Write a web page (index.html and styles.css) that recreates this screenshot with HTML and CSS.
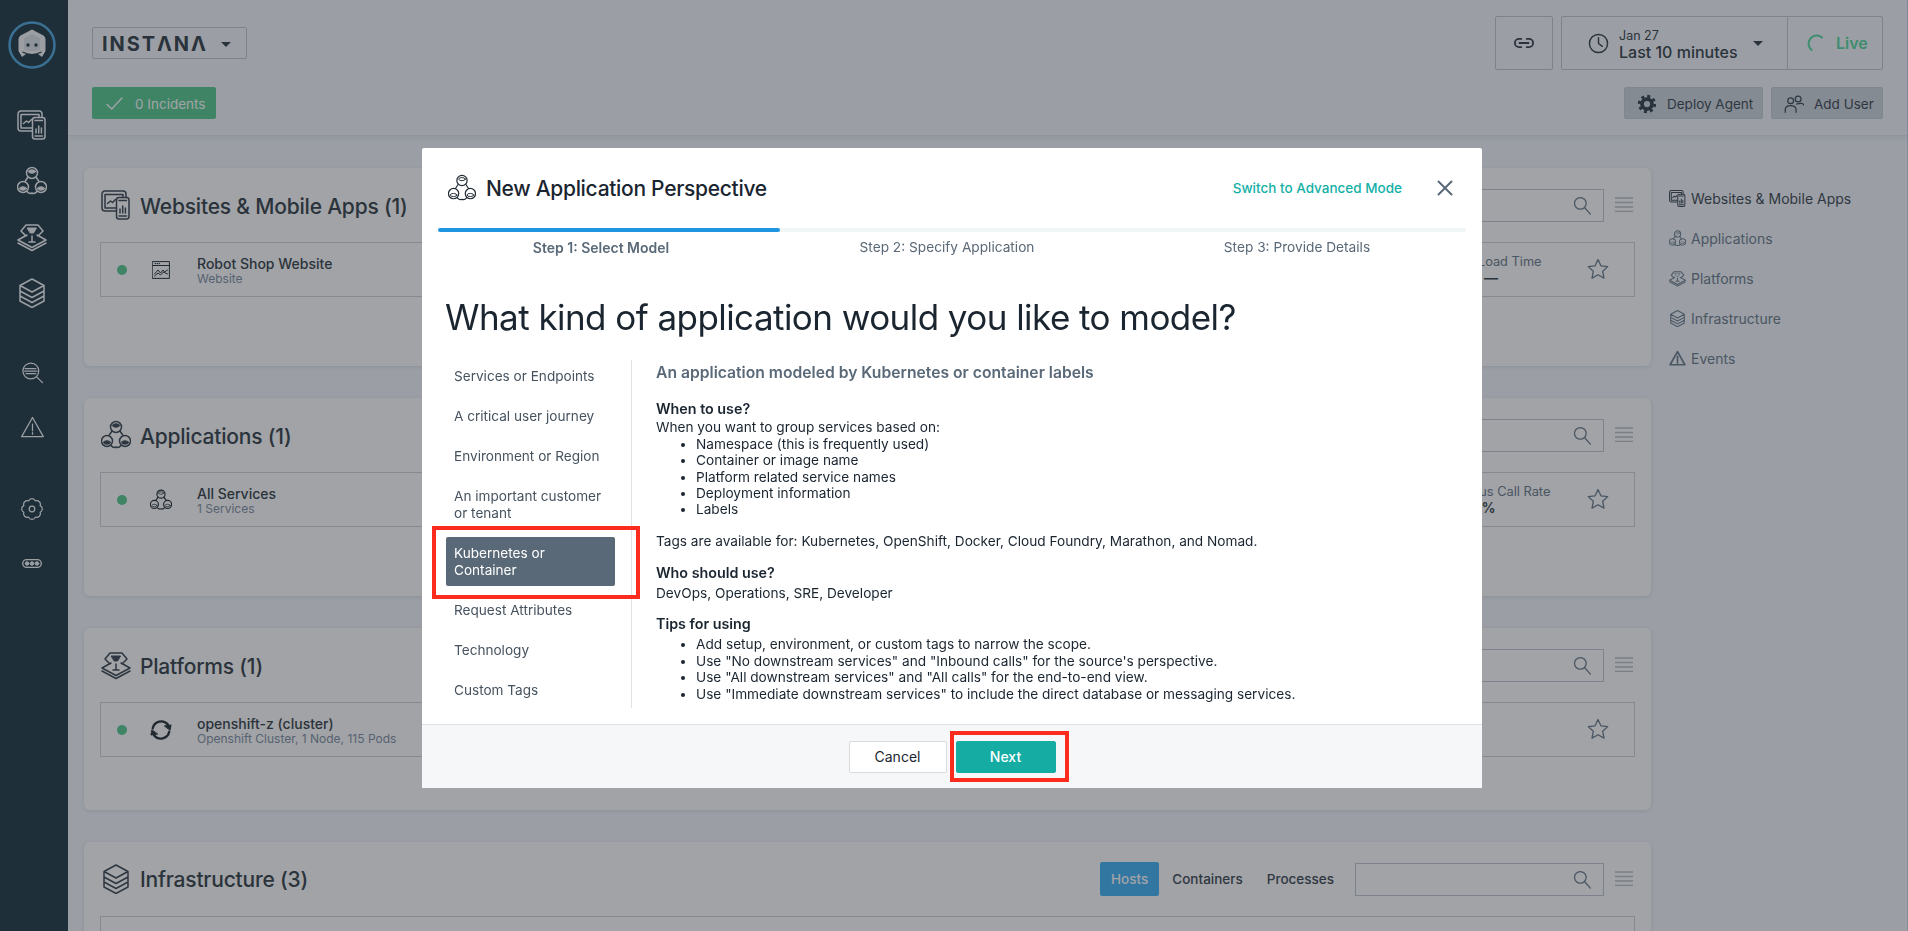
FILE: index.html
```html
<!doctype html>
<html>
<head>
    <meta charset="utf-8">
    <title>Instana - New Application Perspective</title>
    <link rel="stylesheet" href="styles.css">
</head>
<body>
<svg class="defs" xmlns="http://www.w3.org/2000/svg">
    <symbol id="i-web" viewBox="0 0 30 30">
        <path d="M15 21H4a3 3 0 0 1-3-3V4a3 3 0 0 1 3-3h18a3 3 0 0 1 3 3v3M15 18H4V4.500h18V7"/>
        <rect x="15.500" y="7.500" width="12.500" height="21.500" rx="2.500"/>
        <path d="M18 10.500h7.500M18 26h7.500M19 23v-4M21.700 23v-7M24.400 23v-5M6.500 13.500l3-2.500 2 1.500 3-3"/>
    </symbol>
    <symbol id="i-app" viewBox="0 0 30 30">
        <circle cx="15" cy="7" r="5.500"/><circle cx="6" cy="21" r="5.500"/><circle cx="24" cy="21" r="5.500"/>
        <path d="M11 11l-3 4.500M19 11l3 4.500M10 25.500q2.500 3 5 1.500 2.500 1.500 5-1.500"/>
        <ellipse class="solid" cx="15" cy="5.500" rx="3.500" ry="1.700"/><ellipse class="solid" cx="6" cy="22.500" rx="3.500" ry="1.700"/><ellipse class="solid" cx="24" cy="22.500" rx="3.500" ry="1.700"/>
    </symbol>
    <symbol id="i-plat" viewBox="0 0 30 28">
        <path d="M4 8l5-6h12l5 6-5 5M4 8l5 5M10 12l-9 5 14 7.500L29 17l-9-5M1 20l14 7.500L29 20M15 13v6M12 19h6"/>
        <path class="solid" d="M10.500 5h9l-3 5h-3z"/>
    </symbol>
    <symbol id="i-infra" viewBox="0 0 30 30">
        <path d="M15 1l12 6.500V23l-12 6.500L3 23V7.500zM3 7.500L15 14l12-6.500M3 13l12 6.500L27 13M3 18l12 6.500L27 18"/>
    </symbol>
    <symbol id="i-find" viewBox="0 0 30 30">
        <circle cx="13" cy="12" r="9.500"/>
        <path d="M6 9h13M5.500 12h15M7 15h12M20 19l7 7"/>
    </symbol>
    <symbol id="i-warn" viewBox="0 0 30 30">
        <path d="M15 3l13 23H2zM15 11v8M15 21v2"/>
    </symbol>
    <symbol id="i-gear" viewBox="0 0 30 30">
        <path d="M19.210 4.840A4.600 4.600 0 0 1 25.160 10.790 4.600 4.600 0 0 1 25.160 19.210 4.600 4.600 0 0 1 19.210 25.160 4.600 4.600 0 0 1 10.790 25.160 4.600 4.600 0 0 1 4.840 19.210 4.600 4.600 0 0 1 4.840 10.790 4.600 4.600 0 0 1 10.790 4.840 4.600 4.600 0 0 1 19.210 4.840z"/>
        <circle cx="15" cy="15" r="3.500"/>
    </symbol>
    <symbol id="i-star" viewBox="0 0 24 24">
        <path d="M12 2.500l2.900 6.300 6.800.8-5 4.700 1.300 6.800-6-3.400-6 3.400 1.300-6.800-5-4.700 6.800-.8z"/>
    </symbol>
    <symbol id="i-search" viewBox="0 0 24 24">
        <circle cx="10" cy="10" r="7"/><path d="M15 15l7 8"/>
    </symbol>
    <symbol id="i-menu" viewBox="0 0 18 15">
        <path d="M0 1h18M0 5.500h18M0 10h18M0 14.500h18"/>
    </symbol>
</svg>

<div class="app">
    <nav class="sidebar">
        <svg class="bot" viewBox="0 0 48 48">
            <circle class="bot-ring" cx="24" cy="24" r="22.500"/>
            <path class="bot-head" d="M24 8.500l10.500 5.500q3 1.500 3 4.500V30l-3.500 6-4-3H18l-4 3-3.500-6V18.500q0-3 3-4.500z"/>
            <path class="bot-face" d="M24 13l8 4.500V28l-3 2H19l-3-2V17.500z"/>
            <circle class="bot-eye" cx="20" cy="24" r="1.700"/><circle class="bot-eye" cx="28" cy="24" r="1.700"/>
            <path class="bot-chin" d="M14.500 31q9.500 5 19 0"/>
        </svg>
        <div class="side-group">
            <svg class="ic side-ic"><use href="#i-web"/></svg>
            <svg class="ic side-ic"><use href="#i-app"/></svg>
            <svg class="ic side-ic"><use href="#i-plat"/></svg>
            <svg class="ic side-ic"><use href="#i-infra"/></svg>
        </div>
        <div class="side-group side-mid">
            <svg class="ic side-ic"><use href="#i-find"/></svg>
            <svg class="ic side-ic"><use href="#i-warn"/></svg>
        </div>
        <div class="side-group side-low">
            <svg class="ic side-ic"><use href="#i-gear"/></svg>
            <svg class="ic side-more" viewBox="0 0 22 10"><rect x=".7" y=".7" width="20.600" height="8.600" rx="4.300"/><circle class="solid" cx="5.500" cy="5" r="2"/><circle class="solid" cx="11" cy="5" r="2"/><circle class="solid" cx="16.500" cy="5" r="2"/></svg>
        </div>
    </nav>

    <div class="main">
        <header class="topbar">
            <div class="topbar-row">
                <div class="brand"><span class="brand-name">INSTΛNΛ</span><span class="caret"></span></div>
                <div class="top-actions">
                    <button class="top-btn link-btn">
                        <svg class="ic link-ic" viewBox="0 0 22 12"><path d="M8 1.500H5.500a4.500 4.500 0 0 0 0 9H8M14 1.500h2.500a4.500 4.500 0 0 1 0 9H14M6 6h10"/></svg>
                    </button>
                    <div class="time-group">
                        <div class="top-btn time-btn">
                            <svg class="ic clock-ic" viewBox="0 0 22 22"><circle cx="11" cy="11" r="9.500"/><path d="M11 5v6l4 3"/></svg>
                            <div class="time-text"><span class="time-date">Jan 27</span><span class="time-range">Last 10 minutes</span></div>
                            <span class="caret"></span>
                        </div>
                        <div class="top-btn live-btn">
                            <svg class="ic live-ic" viewBox="0 0 18 18"><path d="M4.500 16A8 8 0 0 1 15 3.500"/></svg>
                            <span>Live</span>
                        </div>
                    </div>
                </div>
            </div>
            <div class="topbar-row row-low">
                <div class="incidents">
                    <svg class="ic check-ic" viewBox="0 0 18 14"><path d="M1 8l5 5L17 1"/></svg>
                    <span>0 Incidents</span>
                </div>
                <div class="quick-actions">
                    <div class="quick-btn btn-agent">
                        <svg class="gear-solid" viewBox="0 0 24 24"><circle cx="12" cy="12" r="6" /><circle class="gear-teeth" cx="12" cy="12" r="9"/></svg>
                        <span>Deploy Agent</span>
                    </div>
                    <div class="quick-btn btn-user">
                        <svg class="ic user-ic" viewBox="0 0 24 22"><circle cx="8" cy="7" r="3.500"/><circle cx="17" cy="5" r="3.500"/><path d="M1.500 21v-3q0-5 6.500-5t6.500 5v3M15 11q8-2 8.500 1"/></svg>
                        <span>Add User</span>
                    </div>
                </div>
            </div>
        </header>

        <div class="content">
            <div class="cards">
                <section class="card">
                    <div class="card-head">
                        <svg class="ic card-ic"><use href="#i-web"/></svg>
                        <h2>Websites &amp; Mobile Apps (1)</h2>
                        <div class="search"><svg class="ic search-ic"><use href="#i-search"/></svg></div>
                        <svg class="ic menu-ic"><use href="#i-menu"/></svg>
                    </div>
                    <div class="row">
                        <span class="dot"></span>
                        <span class="row-ic"><svg class="ic win-ic" viewBox="0 0 18 18"><rect x=".6" y=".6" width="16.800" height="16.800"/><path d="M.6 4.500h16.800M3 2.600h.6M5 2.600h.6M7 2.600h.6M2.500 13l3.500-4 2.500 3 2.500-3 1.500 2 3-2M2.500 15l3.500-3 2.500 2 3-3 4 2"/></svg></span>
                        <div class="row-text"><strong>Robot Shop Website</strong><small>Website</small></div>
                        <div class="metric"><span>Mean Load Time</span><b>—</b></div>
                        <svg class="ic star-ic"><use href="#i-star"/></svg>
                    </div>
                </section>

                <section class="card">
                    <div class="card-head">
                        <svg class="ic card-ic"><use href="#i-app"/></svg>
                        <h2>Applications (1)</h2>
                        <div class="search"><svg class="ic search-ic"><use href="#i-search"/></svg></div>
                        <svg class="ic menu-ic"><use href="#i-menu"/></svg>
                    </div>
                    <div class="row">
                        <span class="dot"></span>
                        <span class="row-ic"><svg class="ic app-ic"><use href="#i-app"/></svg></span>
                        <div class="row-text"><strong>All Services</strong><small>1 Services</small></div>
                        <div class="metric metric-rate"><span>Erroneous Call Rate</span><b>0%</b></div>
                        <svg class="ic star-ic"><use href="#i-star"/></svg>
                    </div>
                </section>

                <section class="card card-short">
                    <div class="card-head">
                        <svg class="ic card-ic"><use href="#i-plat"/></svg>
                        <h2>Platforms (1)</h2>
                        <div class="search"><svg class="ic search-ic"><use href="#i-search"/></svg></div>
                        <svg class="ic menu-ic"><use href="#i-menu"/></svg>
                    </div>
                    <div class="row">
                        <span class="dot"></span>
                        <span class="row-ic"><svg class="ic sync-ic" viewBox="0 0 26 24"><path d="M4 10A9.500 9.500 0 0 1 20.500 6M22 14A9.500 9.500 0 0 1 5.500 18"/><path class="solid" d="M17 7.500l7-1-1 5.500zM9 16.500l-7 1 1-5.500z"/></svg></span>
                        <div class="row-text"><strong>openshift-z (cluster)</strong><small>Openshift Cluster, 1 Node, 115 Pods</small></div>
                        <div class="metric"></div>
                        <svg class="ic star-ic"><use href="#i-star"/></svg>
                    </div>
                </section>

                <section class="card">
                    <div class="card-head">
                        <svg class="ic card-ic"><use href="#i-infra"/></svg>
                        <h2 class="title-flat">Infrastructure (3)</h2>
                        <div class="tabs"><span class="tab tab-on">Hosts</span><span class="tab">Containers</span><span class="tab">Processes</span></div>
                        <div class="search"><svg class="ic search-ic"><use href="#i-search"/></svg></div>
                        <svg class="ic menu-ic"><use href="#i-menu"/></svg>
                    </div>
                    <div class="row"></div>
                </section>
            </div>

            <aside class="jump">
                <a class="jump-on"><svg class="ic jump-ic"><use href="#i-web"/></svg>Websites &amp; Mobile Apps</a>
                <a><svg class="ic jump-ic"><use href="#i-app"/></svg>Applications</a>
                <a><svg class="ic jump-ic"><use href="#i-plat"/></svg>Platforms</a>
                <a><svg class="ic jump-ic"><use href="#i-infra"/></svg>Infrastructure</a>
                <a><svg class="ic jump-ic jump-warn"><use href="#i-warn"/></svg>Events</a>
            </aside>
        </div>
    </div>
</div>

<div class="overlay">
    <div class="modal">
        <div class="modal-head">
            <svg class="ic modal-ic"><use href="#i-app"/></svg>
            <h3>New Application Perspective</h3>
            <a class="advanced">Switch to Advanced Mode</a>
            <svg class="ic close-ic" viewBox="0 0 16 16"><path d="M1.500 1.500l13 13M14.500 1.500l-13 13"/></svg>
        </div>
        <div class="progress"><div class="progress-on"></div></div>
        <div class="steps">
            <span class="step step-on">Step 1: Select Model</span>
            <span class="step">Step 2: Specify Application</span>
            <span class="step">Step 3: Provide Details</span>
        </div>
        <h1>What kind of application would you like to model?</h1>
        <div class="modal-body">
            <ul class="models">
                <li>Services or Endpoints</li>
                <li>A critical user journey</li>
                <li>Environment or Region</li>
                <li>An important customer or tenant</li>
                <li class="model-on">Kubernetes or Container<span class="callout callout-model"></span></li>
                <li>Request Attributes</li>
                <li>Technology</li>
                <li>Custom Tags</li>
            </ul>
            <div class="detail">
                <h4>An application modeled by Kubernetes or container labels</h4>
                <b class="detail-top">When to use?</b>
                <p class="lead">When you want to group services based on:</p>
                <ul class="bullets">
                    <li>Namespace (this is frequently used)</li>
                    <li>Container or image name</li>
                    <li>Platform related service names</li>
                    <li>Deployment information</li>
                    <li>Labels</li>
                </ul>
                <p class="gap">Tags are available for: Kubernetes, OpenShift, Docker, Cloud Foundry, Marathon, and Nomad.</p>
                <b class="gap-who">Who should use?</b>
                <p class="lead-who">DevOps, Operations, SRE, Developer</p>
                <b class="gap">Tips for using</b>
                <ul class="bullets lead-tips">
                    <li>Add setup, environment, or custom tags to narrow the scope.</li>
                    <li>Use "No downstream services" and "Inbound calls" for the source's perspective.</li>
                    <li>Use "All downstream services" and "All calls" for the end-to-end view.</li>
                    <li>Use "Immediate downstream services" to include the direct database or messaging services.</li>
                </ul>
            </div>
        </div>
        <div class="modal-foot">
            <button class="btn">Cancel</button>
            <button class="btn btn-next">Next<span class="callout callout-next"></span></button>
        </div>
    </div>
</div>
</body>
</html>
```

FILE: styles.css
```css
*{box-sizing:border-box;}
html,body{height:100%;}
body{margin:0; padding:0; overflow:hidden; background:#f4f8fd; color:#3a4651; font-family:"Inter","Liberation Sans",sans-serif; font-size:14px;}
h1,h2,h3,h4,p,ul{margin:0; padding:0;}
ul{list-style:none;}
button{font-family:inherit;}
.defs{width:0; height:0; position:absolute;}

/* icons are stroke only unless marked solid */
.ic{display:block; fill:none; stroke:currentColor; stroke-width:1.5; flex:none; stroke-linecap:round; stroke-linejoin:round;}
.solid{fill:var(--solid,currentColor); stroke:currentColor; stroke-width:1;}

.app{display:flex; height:931px;}

/* sidebar */
.sidebar{width:68px; flex:none; background:#203744; color:#f5f8fa; display:flex; flex-direction:column; align-items:center; padding:21px 4px 0 0;}
.bot{width:48px; height:48px; display:block;}
.bot-ring{fill:none; stroke:#4fa8e0; stroke-width:2.500;}
.bot-head{fill:#f5f8fa;}
.bot-face{fill:#dfe4e8;}
.bot-eye{fill:#203744;}
.bot-chin{fill:none; stroke:#203744; stroke-width:1.200;}
.side-group{display:flex; flex-direction:column; align-items:center; gap:26px;}
.side-group:nth-child(2){margin-top:41px;}
.side-ic{width:30px; height:30px;}
.side-mid{margin-top:53px; gap:29px;}
.side-mid .side-ic{width:25px; height:25px;}
.side-low{margin-top:57px; gap:38px;}
.side-low .side-ic{width:24px; height:24px;}
.side-more{width:22px; height:9px;}

.main{flex:1; min-width:0; border-right:1px solid #d2d8df;}

/* top bar */
.topbar{height:136px; padding:16px 24px 0; border-bottom:1px solid #e4e8ee; box-shadow:0 2px 6px rgba(30,40,55,.08);}
.topbar-row{display:flex; justify-content:space-between; align-items:center; height:54px;}
.row-low{height:32px; margin-top:17px;}
.brand{width:155px; height:32px; border:1px solid #c2c8d3; border-radius:2px; display:flex; align-items:center; padding:2px 0 0 9px; gap:13px;}
.brand-name{font-size:20px; font-weight:700; letter-spacing:1.900px; color:#333e48;}
.caret{width:0; height:0; border:5px solid transparent; border-top:5px solid #333e48; border-bottom:0; flex:none;}
.top-actions{display:flex; gap:8px;}
.time-group{display:flex;}
.top-btn{height:54px; border:1px solid #c2c8d3; border-radius:2px; background:none; display:flex; align-items:center;}
.link-btn{width:58px; justify-content:center; color:#333e48;}
.link-ic{width:20px; height:12px; stroke-width:2;}
.time-btn{width:226px; padding-left:26px; border-radius:2px 0 0 2px; border-right:0; color:#333e48;}
.clock-ic{width:21px; height:21px; margin-right:10px;}
.time-text{display:flex; flex-direction:column; width:134px; padding-top:3px;}
.time-date{font-size:12.500px; line-height:14px;}
.time-range{font-size:16px; font-weight:500; line-height:18px;}
.live-btn{width:96px; padding-left:19px; gap:11px; color:#55d9a0; font-size:16px; font-weight:600; border-radius:0 2px 2px 0;}
.live-ic{width:18px; height:18px; stroke-width:2;}
.incidents{width:124px; height:32px; background:#55ca90; border-radius:2px; color:#fff; display:flex; align-items:center; padding:1px 0 0 14px; gap:12px; font-size:13.500px;}
.check-ic{width:17px; height:13px;}
.quick-actions{display:flex; gap:8px;}
.quick-btn{height:32px; padding:1px 0 0 12px; background:#cfd6df; border:1px solid #c5cdd6; border-radius:2px; display:flex; align-items:center; gap:10px; font-size:13.500px; white-space:nowrap;}
.btn-agent{width:139px;}
.btn-user{width:112px;}
.gear-solid{width:20px; height:20px; flex:none; fill:none; stroke:#333e48; stroke-width:4.500;}
.gear-teeth{stroke-width:4; stroke-dasharray:3.500 3.570;}
.user-ic{width:20px; height:20px;}

/* cards */
.content{display:flex; padding:32px 0 0 16px; gap:18px;}
.cards{width:1567px; flex:none; display:flex; flex-direction:column; gap:32px;}
.card{background:#fff; border-radius:6px; padding:0 16px 69px; box-shadow:0 1px 4px rgba(30,40,55,.12);}
.card-short{padding-bottom:53px;}
.card-head{height:74px; display:flex; align-items:center; padding:0 2px 0 1px;}
.card-ic{width:30px; height:30px; margin-right:9px;}
.card-head h2{flex:1; padding-top:2px; font-size:21px; font-weight:500; letter-spacing:-.2px; color:#333e48;}
.card-head .title-flat{padding-top:0;}
.search{width:249px; height:33px; border:1px solid #c2c8d3; display:flex; align-items:center; justify-content:flex-end; padding-right:11px; color:#6b7a8c;}
.search-ic{width:20px; height:20px;}
.menu-ic{width:18px; height:15px; margin:0 0 2px 11px; color:#bcc2c9;}
.tabs{display:flex; align-items:center; margin-right:9px; font-size:13.500px;}
.tab{padding:0 12px; height:34px; display:flex; align-items:center; font-weight:500;}
.tab-on{background:#41b2f9; color:#fff; border-radius:2px; padding:0 11px; margin-right:1px;}
.row{height:55px; border:1px solid #cdd3dc; display:flex; align-items:center; padding:0 24px 0 16px;}
.dot{width:10px; height:10px; border-radius:50%; background:#55ca90; flex:none;}
.row-ic{width:24px; margin:0 24px 0 22px; flex:none; display:flex; justify-content:center; color:#222c35;}
.win-ic{width:18px; height:18px; stroke-width:1;}
.app-ic{width:22px; height:22px; stroke-width:1.600; --solid:none;}
.sync-ic{width:24px; height:22px; stroke-width:2.600;}
.row-text{flex:1; display:flex; flex-direction:column; padding-top:2px;}
.row-text strong{font-weight:500; line-height:16px; color:#333e48;}
.row-text small{font-size:12px; line-height:14px; color:#7f8fa5;}
.metric{width:120px; margin-right:35px; padding-top:1px; flex:none; display:flex; flex-direction:column; align-items:center; white-space:nowrap; font-size:12.800px; color:#6b7a8c;}
.metric b{font-size:14px; font-weight:600; color:#333e48;}
.metric-rate b{margin-right:14px;}
.star-ic{width:24px; height:24px; margin-bottom:2px; color:#6b7a8c; stroke-width:1.300;}

/* section links on the right */
.jump{padding-top:20px; display:flex; flex-direction:column; gap:20px;}
.jump a{display:flex; align-items:center; height:20px; white-space:nowrap; color:#6b7a8c;}
.jump a.jump-on{color:#3a4651;}
.jump-ic{width:17px; height:17px; margin-right:5px; stroke-width:1.800; --solid:none;}
.jump-warn{stroke-width:3;}

/* dialog */
.overlay{position:fixed; top:0; left:0; right:0; bottom:0; background:rgba(30,36,44,.42); padding:148px 0 0 422px;}
.modal{width:1060px; height:640px; background:#fff; border-radius:2px; display:flex; flex-direction:column; color:#1a2530;}
.modal-head{height:80px; flex:none; display:flex; align-items:center; padding:0 29px 0 26px;}
.modal-ic{width:28px; height:28px; margin-right:10px; stroke-width:1.300; color:#222c35; --solid:none;}
.modal-head h3{flex:1; font-size:21px; font-weight:500; letter-spacing:-.3px; color:#1a2530;}
.advanced{color:#14b0a6; font-weight:500; font-size:13.500px; margin-right:35px;}
.close-ic{width:16px; height:16px; color:#5a6978; stroke-width:2;}
.progress{height:4px; margin:0 16px; background:#f0f5f5; border-radius:2px; flex:none;}
.progress-on{width:342px; height:4px; background:#2196e0; border-radius:2px;}
.steps{display:grid; grid-template-columns:348px 344px 356px; padding-left:5px; height:30px; flex:none; align-items:center;}
.step{text-align:center; color:#5a6978; font-size:13.700px; font-weight:400;}
.step-on{font-size:14px; font-weight:600;}
.modal h1{font-size:35px; font-weight:400; line-height:44px; letter-spacing:-.55px; margin:33px 0 21px 23px; color:#1a2530; flex:none;}
.modal-body{display:flex; height:348px; flex:none;}
.models{width:210px; flex:none; padding:0 16px 0 24px; border-right:1px solid #dfe3e6; display:flex; flex-direction:column; gap:8.500px; color:#46535f; font-size:13.600px; line-height:17px;}
.models li{padding:8px 7px 6.500px 8px;}
.models .model-on{position:relative; background:#5a6978; color:#fff; border-radius:2px;}
.callout{position:absolute; border:4px solid #fb2b1e; pointer-events:none;}
.callout-model{left:-14px; right:-25px; top:-11px; bottom:-13px;}
.callout-next{left:-7px; right:-14px; top:-11px; bottom:-10px;}
.detail{padding:4px 0 0 24px; font-size:13.650px; line-height:16.400px; color:#1a2530;}
.detail b{display:block; font-weight:600; font-size:14.300px;}
.detail h4{font-size:15.700px; line-height:18px; font-weight:600; color:#5a6978;}
.detail-top{margin-top:19px;}
.lead{margin-top:2px;}
.gap{margin-top:15px;}
.gap-who{margin-top:16px;}
.lead-who{margin-top:3px;}
.lead-tips{margin-top:4px;}
.bullets{padding-left:40px; list-style:disc;}
.modal-foot{height:64px; flex:none; margin-top:16px; border-top:1px solid #dfe1e4; background:#f6f7f9; display:flex; justify-content:center; align-items:center; gap:9px;}
.btn{position:relative; width:98px; height:32px; background:#fff; border:1px solid #d8dadd; border-radius:2px; color:#1a2530; font-size:14px; font-weight:400; padding:0;}
.btn-next{width:100px; background:#14aca3; border-color:#14aca3; color:#fff; font-weight:500;}
```
